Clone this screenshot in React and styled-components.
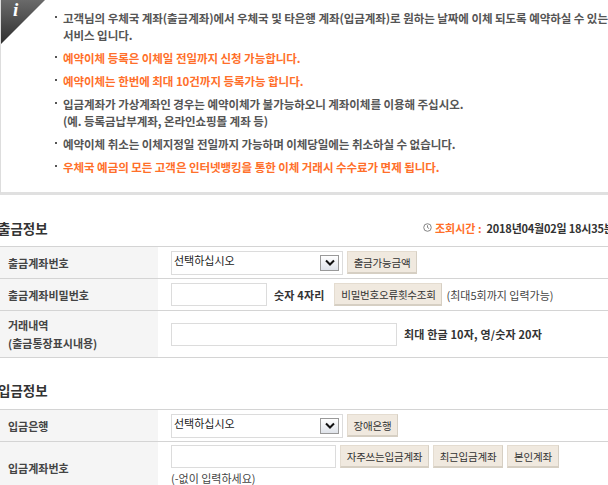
import React from "react";
import styled, { createGlobalStyle } from "styled-components";

const notices = [
  { lines: ["고객님의 우체국 계좌(출금계좌)에서 우체국 및 타은행 계좌(입금계좌)로 원하는 날짜에 이체 되도록 예약하실 수 있는", "서비스 입니다."] },
  { lines: ["예약이체 등록은 이체일 전일까지 신청 가능합니다."], accent: true },
  { lines: ["예약이체는 한번에 최대 10건까지 등록가능 합니다."], accent: true },
  { lines: ["입금계좌가 가상계좌인 경우는 예약이체가 불가능하오니 계좌이체를 이용해 주십시오.", "(예. 등록금납부계좌, 온라인쇼핑몰 계좌 등)"] },
  { lines: ["예약이체 취소는 이체지정일 전일까지 가능하며 이체당일에는 취소하실 수 없습니다."] },
  { lines: ["우체국 예금의 모든 고객은 인터넷뱅킹을 통한 이체 거래시 수수료가 면제 됩니다."], accent: true },
];

function SelectBox() {
  return (
    <Select>
      <span>선택하십시오</span>
      <Arrow>
        <svg width="12" height="8" viewBox="0 0 12 8">
          <path d="M2 1.5 L6 5.5 L10 1.5" fill="none" stroke="#111" strokeWidth="2" />
        </svg>
      </Arrow>
    </Select>
  );
}

export default function App() {
  return (
    <Page>
      <GlobalStyle />
      <NoticeBox>
        <Corner>
          <CornerLetter>i</CornerLetter>
        </Corner>
        <NoticeList>
          {notices.map((n) => (
            <NoticeItem key={n.lines[0]} $accent={n.accent}>
              {n.lines.map((line) => (
                <div key={line}>{line}</div>
              ))}
            </NoticeItem>
          ))}
        </NoticeList>
      </NoticeBox>

      <SectionHead>
        <SectionTitle>출금정보</SectionTitle>
        <QueryTime>
          <svg width="9" height="9" viewBox="0 0 10 10">
            <circle cx="5" cy="5" r="4.2" fill="none" stroke="#777" strokeWidth="1" />
            <path d="M5 2.5 V5 L6.8 6.2" fill="none" stroke="#777" strokeWidth="1" />
          </svg>
          <TimeLabel>조회시간 :</TimeLabel>
          <b>2018년04월02일 18시35분</b>
        </QueryTime>
      </SectionHead>
      <FormTable>
        <Row $height={32}>
          <Label>출금계좌번호</Label>
          <Field>
            <SelectBox />
            <Button $width={70}>출금가능금액</Button>
          </Field>
        </Row>
        <Row $height={32}>
          <Label>출금계좌비밀번호</Label>
          <Field>
            <Input $width={96} />
            <Hint>숫자 4자리</Hint>
            <Button $width={108} $left={6}>비밀번호오류횟수조회</Button>
            <Note>(최대5회까지 입력가능)</Note>
          </Field>
        </Row>
        <Row $height={47}>
          <Label>
            <span>거래내역</span>
            <span>(출금통장표시내용)</span>
          </Label>
          <Field>
            <Input $width={226} />
            <Hint>최대 한글 10자, 영/숫자 20자</Hint>
          </Field>
        </Row>
      </FormTable>

      <SectionHead $second>
        <SectionTitle>입금정보</SectionTitle>
      </SectionHead>
      <FormTable>
        <Row $height={32}>
          <Label>입금은행</Label>
          <Field>
            <SelectBox />
            <Button $width={51}>장애은행</Button>
          </Field>
        </Row>
        <Row $height={52}>
          <Label>입금계좌번호</Label>
          <StackField>
            <Field>
              <Input $width={165} />
              <Button $width={89}>자주쓰는입금계좌</Button>
              <Button $width={70}>최근입금계좌</Button>
              <Button $width={52}>본인계좌</Button>
            </Field>
            <Note>(-없이 입력하세요)</Note>
          </StackField>
        </Row>
      </FormTable>
    </Page>
  );
}

const GlobalStyle = createGlobalStyle`
  html, body {
    margin: 0;
    padding: 0;
    background: #fff;
    overflow: hidden;
  }
  body {
    font-family: "Noto Sans CJK KR", "Noto Sans", sans-serif;
  }
`;

const Page = styled.div`
  width: 608px;
  height: 485px;
  overflow: hidden;
  font-size: 11px;
  color: #333;
  white-space: nowrap;
`;

const NoticeBox = styled.section`
  position: relative;
  box-sizing: border-box;
  border-left: 1px solid #ddd;
  border-bottom: 3px solid #e0e0e0;
  height: 195px;
  padding: 10px 0 0 62px;
`;

const Corner = styled.div`
  position: absolute;
  left: 0;
  top: 0;
  width: 44px;
  height: 44px;
  background: linear-gradient(to bottom, #6a6a6a, #2e2e2e);
  clip-path: polygon(0 0, 100% 0, 0 100%);
`;

const CornerLetter = styled.span`
  position: absolute;
  left: 12px;
  top: -1px;
  font: italic bold 19px "Liberation Serif", serif;
  color: #fff;
`;

const NoticeList = styled.ul`
  list-style: none;
  margin: 0;
  padding: 0;
  display: flex;
  flex-direction: column;
  gap: 6px;
`;

const NoticeItem = styled.li`
  position: relative;
  line-height: 17px;
  font-size: 11.5px;
  font-weight: 700;
  letter-spacing: -0.005em;
  color: ${(p) => (p.$accent ? "#ff6f2a" : "#555")};

  &::before {
    content: "";
    position: absolute;
    left: -8px;
    top: 6px;
    width: 2px;
    height: 2px;
    background: #555;
  }
`;

const SectionHead = styled.div`
  display: flex;
  align-items: center;
  height: 25px;
  margin-top: ${(p) => (p.$second ? "19px" : "20px")};
  margin-bottom: ${(p) => (p.$second ? "7px" : "6px")};
`;

const SectionTitle = styled.h2`
  margin: 0 0 0 -2px;
  width: 52px;
  flex: none;
  font-size: 13.5px;
  font-weight: 700;
  color: #333;
`;

const QueryTime = styled.div`
  display: flex;
  align-items: center;
  gap: 3px;
  margin-left: 373px;
  font-size: 11px;
  font-weight: 700;
  color: #333;

  b {
    font-weight: 700;
    margin-left: 2px;
    letter-spacing: -0.02em;
  }
`;

const TimeLabel = styled.span`
  color: #ff6f2a;
`;

const FormTable = styled.div`
  border-top: 1px solid #d4d4d4;
`;

const Row = styled.div`
  display: flex;
  box-sizing: border-box;
  height: ${(p) => p.$height}px;
  border-bottom: 1px solid #d4d4d4;
`;

const Label = styled.div`
  display: flex;
  flex-direction: column;
  justify-content: center;
  align-items: flex-start;
  width: 158px;
  flex: none;
  box-sizing: border-box;
  padding-left: 8px;
  background: #f5f5f5;
  font-weight: 700;
  line-height: 18px;
  color: #444;
`;

const Field = styled.div`
  display: flex;
  align-items: center;
  gap: 4px;
  padding-left: 13px;
`;

const StackField = styled.div`
  display: flex;
  flex-direction: column;
  padding-top: 3px;
  gap: 2px;

  & > span {
    margin-left: 13px;
  }
`;

const Select = styled.div`
  display: flex;
  align-items: center;
  justify-content: space-between;
  box-sizing: border-box;
  width: 172px;
  height: 24px;
  padding: 0 3px 5px 2px;
  border: 1px solid #dcdcdc;
  background: #fff;
  font-size: 11px;
  color: #222;
`;

const Arrow = styled.span`
  display: flex;
  align-items: center;
  justify-content: center;
  width: 17px;
  height: 14px;
  margin-top: 5px;
  border: 1px solid #999;
  background: linear-gradient(#fff, #dfe3ea);
`;

const Input = styled.input`
  box-sizing: border-box;
  width: ${(p) => p.$width}px;
  height: 23px;
  padding: 0;
  border: 1px solid #dcdcdc;
  background: #fff;
`;

const Button = styled.button`
  box-sizing: border-box;
  width: ${(p) => p.$width}px;
  height: 23px;
  padding: 0;
  margin-left: ${(p) => p.$left || 0}px;
  border: 1px solid #e4dcd0;
  border-right-color: #d6cfc3;
  border-bottom: 2px solid #d6cfc3;
  background: #f0e9df;
  font-family: inherit;
  font-size: 10.5px;
  letter-spacing: -0.02em;
  color: #333;
`;

const Hint = styled.span`
  margin-left: 3px;
  font-weight: 700;
  letter-spacing: 0.015em;
  color: #333;
`;

const Note = styled.span`
  color: #444;
`;
